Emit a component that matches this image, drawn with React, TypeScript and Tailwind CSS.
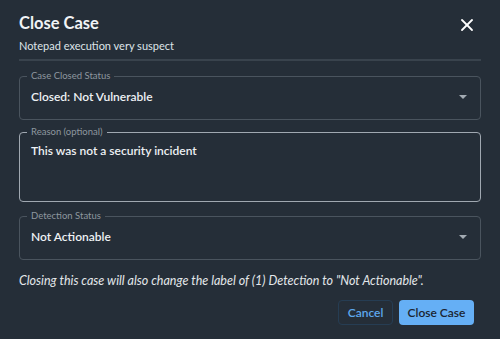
import React from 'react';
import { X } from 'lucide-react';

const Caret = () => (
  <svg width="8" height="4" viewBox="0 0 8 4" className="shrink-0">
    <path d="M0 0 L8 0 L4 4 Z" fill="#a3abb3" />
  </svg>
);

type FieldProps = {
  label: string;
  value: string;
  select?: boolean;
  focused?: boolean;
  tall?: boolean;
};

const Field: React.FC<FieldProps> = ({ label, value, select, focused, tall }) => {
  return (
    <fieldset
      className={`rounded-[4px] border pl-[11px] pr-[13px] ${
        focused ? 'border-[#a0a8b1]' : 'border-[#4a545e]'
      } ${tall ? 'h-[76px]' : 'h-[50px]'}`}
    >
      <legend className="ml-[-4px] px-[4px] text-[9.5px] leading-[12px] text-[#8e979f]">{label}</legend>
      {tall ? (
        <div className="pt-[4px] text-[12px] font-semibold leading-[18px] text-[#eef1f4]">{value}</div>
      ) : (
        <div className="flex h-[30px] items-center justify-between">
          <span className="text-[12px] font-semibold leading-[18px] text-[#eef1f4]">{value}</span>
          {select && <Caret />}
        </div>
      )}
    </fieldset>
  );
};

export default function App() {
  return (
    <div
      className="w-[500px] h-[339px] bg-[#252e38] px-[19px] text-[#e8ecef]"
      style={{ fontFamily: 'Lato, "Noto Sans", sans-serif' }}
    >
      {/* Header */}
      <div className="flex h-[33px] items-start justify-between pt-[13px]">
        <h1 className="text-[16.5px] font-bold leading-[20px] text-[#f1f4f6]">Close Case</h1>
        <button className="mt-[2px] mr-[4px] text-white">
          <X size={20} strokeWidth={2.2} />
        </button>
      </div>
      <p className="mt-[6px] text-[11px] leading-[14px] text-[#dfe4e8]">Notepad execution very suspect</p>
      <div className="mt-[6px] h-[2px] bg-[#39434d]" />

      {/* Form */}
      <div className="mt-[9px] flex flex-col gap-[6px]">
        <Field label="Case Closed Status" value="Closed: Not Vulnerable" select />
        <Field label="Reason (optional)" value="This was not a security incident" focused tall />
        <div className="mt-[2px]">
          <Field label="Detection Status" value="Not Actionable" select />
        </div>
      </div>

      <p className="mt-[12px] text-[12.5px] italic leading-[18px] text-[#e3e7ea]">
        Closing this case will also change the label of (1) Detection to "Not Actionable".
      </p>

      {/* Actions */}
      <div className="mt-[10px] flex justify-end gap-[6px] pr-[7px]">
        <button className="h-[25px] w-[55px] rounded-[4px] border border-[#263d53] text-[12px] font-semibold text-[#5ea8ee]">
          Cancel
        </button>
        <button className="h-[25px] w-[75px] rounded-[4px] bg-[#65aff5] text-[12px] font-semibold text-[#1b2430]">
          Close Case
        </button>
      </div>
    </div>
  );
}
